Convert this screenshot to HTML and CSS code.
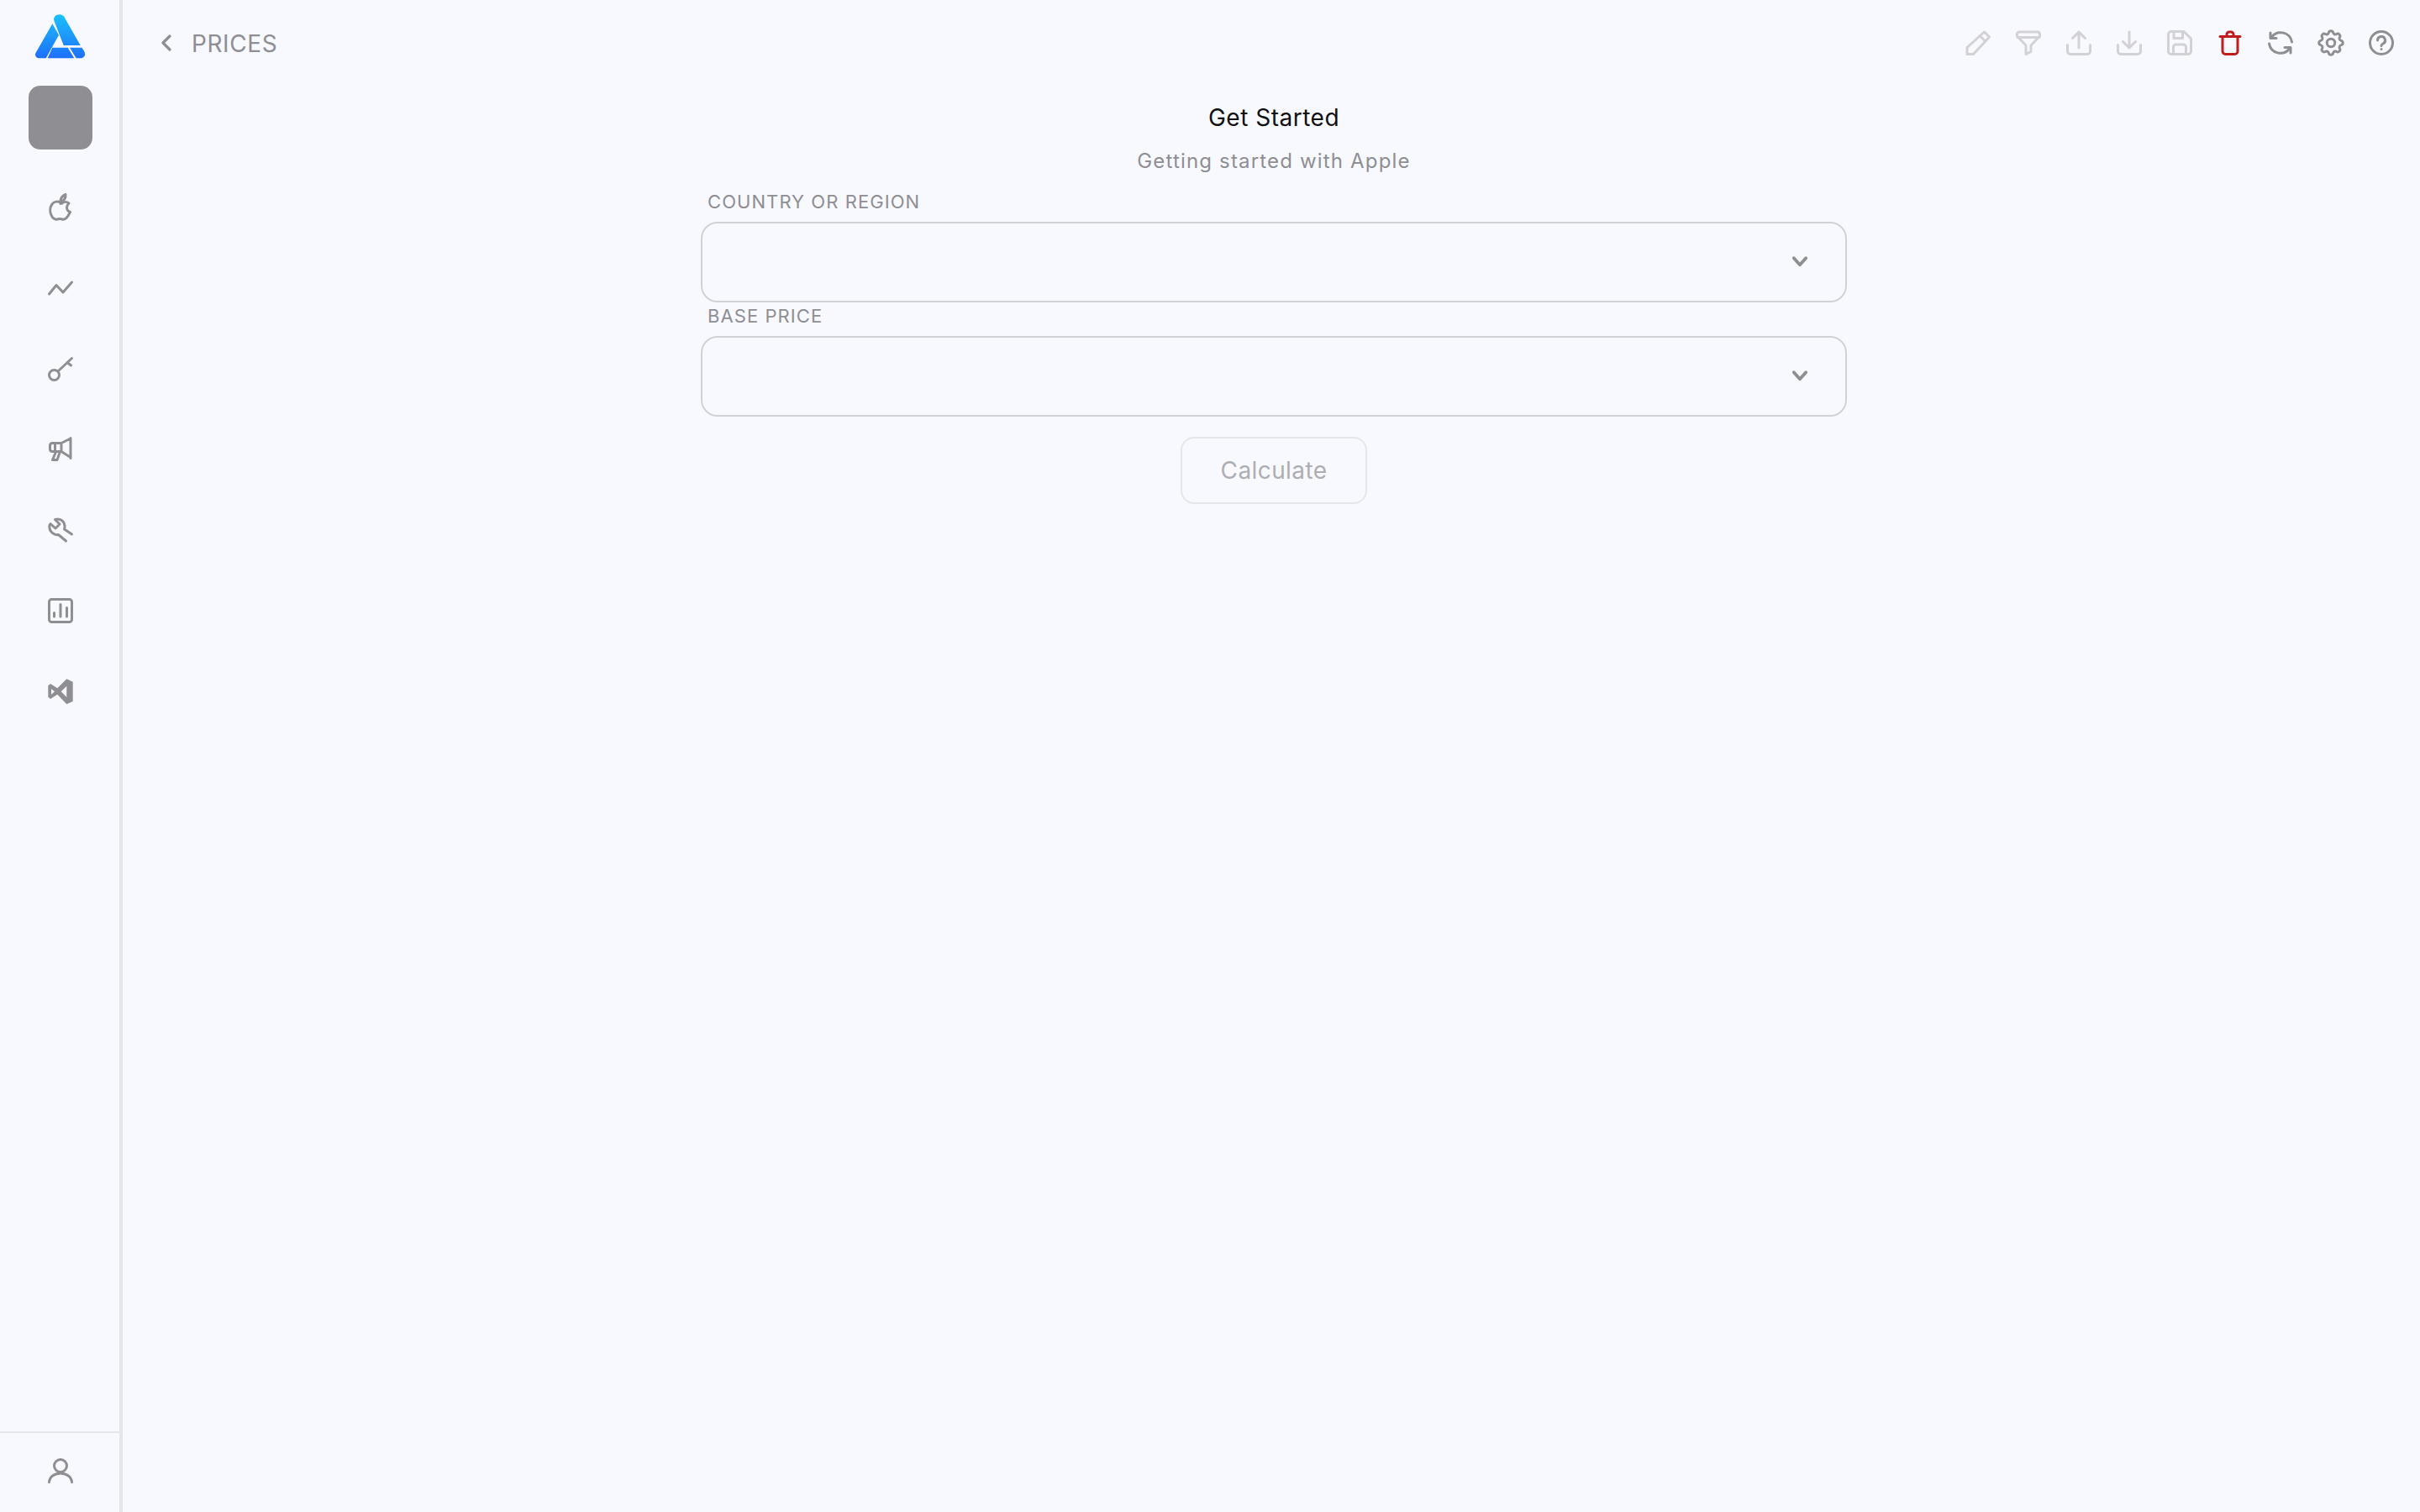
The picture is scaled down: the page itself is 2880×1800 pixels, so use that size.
FILE: index.html
```html
<!DOCTYPE html>
<html lang="en">
<head>
<meta charset="utf-8">
<title>Prices</title>
<link rel="stylesheet" href="styles.css">
</head>
<body>
<div class="app">
  <aside class="sidebar">
    <div class="side-top">
      <svg class="logo" viewBox="0 0 60 54" aria-hidden="true">
        <defs><linearGradient id="lg" x1="0" y1="0" x2="0" y2="1"><stop offset="0" stop-color="#19c1fd"/><stop offset="1" stop-color="#1f6ffa"/></linearGradient></defs>
        <path fill="url(#lg)" d="M22.500 8C21 5 23.500 .3 28.700 .3 31.500 .3 34 1.500 35.300 4.700L53.700 37H33.700ZM20.300 11.300L28 24.700 12.700 52.300 4.500 52.300C1 52.300-1 49 .5 46ZM20.300 39.700H38.700L46.300 52.300H14.700ZM41 39.700H55.300C58.500 44 60 47 58.700 49.500 57.500 51.500 55.500 52.300 53.700 52.300H48.700Z"/>
      </svg>
      <div class="avatar"></div>
      <nav class="side-nav">
        <a class="side-btn"><svg class="ico" viewBox="0 0 30 30"><path d="M15 9C12 7 7 8 5 11 2 15 2 21 5 26c2 3 4 3.500 6 3 2-.7 4-.7 6 0 3 1 5-1 7-4l2.500-4.500c-3-1-4-3-4-5.500 0-2 1-3.500 2.500-5-2.500-2-6-2-8 0-1 .5-1.500.5-2 .5Z"/><path d="M15 8.500C15 4 17 1 21 -.5 21.500 4 19 7 15 8.500Z"/></svg></a>
        <a class="side-btn"><svg class="ico" viewBox="0 0 30 30"><path d="M1.500 22L10 11.500 18 20 28.500 8"/></svg></a>
        <a class="side-btn"><svg class="ico" viewBox="0 0 30 30"><circle cx="7.500" cy="22.500" r="6"/><path d="M12 18L28.500 2.500M23 7.500L27.500 11"/></svg></a>
        <a class="side-btn"><svg class="ico" viewBox="0 0 30 30"><path d="M27 1.500V25.500M27 2L16 7.500H5A3 3 0 0 0 2.500 10.500V14.500A3 3 0 0 0 5 17.500H16L27 24.500M16 7.500V17.500M8.500 8V17M9.500 18L5.500 27.500H11L14 19"/></svg></a>
        <a class="side-btn"><svg class="ico" viewBox="0 0 30 30"><path d="M12.500 20.500C8 21.500 2 17.500 1.800 11.500 1.700 10 2 8.500 3 7.500L9 13 14 8 8.500 2.500C14 .5 19.500 4 20 10 20.200 11.500 20 13 19.500 14L28.500 20M12.500 20.500L21.500 28"/></svg></a>
        <a class="side-btn"><svg class="ico" viewBox="0 0 30 30"><rect x="1.500" y="1.500" width="27" height="27" rx="3"/><path d="M7.500 17.500V22M15 7.500V22M22.500 11.500V22"/></svg></a>
        <a class="side-btn"><svg class="ico ico-fill" viewBox="0 0 30 30"><path fill-rule="evenodd" d="M22.300 .3L29.700 3.700V27L22.300 30.300 11.300 18.700 3 24 .3 21.700V8.300L3 6 11.300 11.300ZM22.300 8.700L15.700 15.300 22.300 22ZM4 12V18.700L8 15.300Z"/></svg></a>
      </nav>
    </div>
    <div class="side-bottom">
      <svg class="ico" viewBox="0 0 30 30"><circle cx="15" cy="9" r="7.500"/><path d="M1.500 28.500C2 22 8 18 15 18S28 22 28.500 28.500"/></svg>
    </div>
  </aside>
  <main class="main">
    <header class="topbar">
      <div class="crumb">
        <svg class="back" viewBox="0 0 12 20"><path d="M10 2L2 10l8 8"/></svg>
        <span class="crumb-text">PRICES</span>
      </div>
      <div class="tools">
        <svg class="ico ico-off" viewBox="0 0 30 30"><path d="M2 28.500V20.500L22.500 2 28.500 8 9.500 28.500ZM17 6.500L23.500 13"/></svg>
        <svg class="ico ico-off" viewBox="0 0 30 30"><path d="M4 2H26A2.500 2.500 0 0 1 28.500 4.500V7L18 18V25.500L12 28.500V18L1.500 7V4.500A2.500 2.500 0 0 1 4 2ZM2 8.500H28"/></svg>
        <svg class="ico ico-off" viewBox="0 0 30 30"><path d="M1.500 17.500V25A3.500 3.500 0 0 0 5 28.500H25A3.500 3.500 0 0 0 28.500 25V17.500M15 21V2M7.500 9.500L15 2 22.500 9.500"/></svg>
        <svg class="ico ico-off" viewBox="0 0 30 30"><path d="M1.500 17.500V25A3.500 3.500 0 0 0 5 28.500H25A3.500 3.500 0 0 0 28.500 25V17.500M15 2V21M7.500 13.500L15 21 22.500 13.500"/></svg>
        <svg class="ico ico-off" viewBox="0 0 30 30"><path d="M5 1.500H20L28.500 10V25A3.500 3.500 0 0 1 25 28.500H5A3.500 3.500 0 0 1 1.500 25V5A3.500 3.500 0 0 1 5 1.500ZM8 2V9.500H18.500V2M7.500 28V20A3 3 0 0 1 10.500 17H19.500A3 3 0 0 1 22.500 20V28"/></svg>
        <svg class="ico ico-red" viewBox="0 0 30 30"><path d="M3 7.500H27M6 7.500V25A3.500 3.500 0 0 0 9.500 28.500H20.500A3.500 3.500 0 0 0 24 25V7.500M11 7.500V5A3 3 0 0 1 14 2H16A3 3 0 0 1 19 5V7.500"/></svg>
        <svg class="ico" viewBox="0 0 30 30"><path d="M28.500 14A13.500 13.500 0 0 0 4.500 8M3 3V9.500H10M1.500 16A13.500 13.500 0 0 0 25.500 22M27 27V20.500H20"/></svg>
        <svg class="ico" viewBox="2.500 2.500 19 19"><g class="gear"><path d="M10.325 4.317c.426-1.756 2.924-1.756 3.35 0a1.724 1.724 0 0 0 2.573 1.066c1.543-.94 3.31.826 2.37 2.37a1.724 1.724 0 0 0 1.065 2.572c1.756.426 1.756 2.924 0 3.35a1.724 1.724 0 0 0-1.066 2.573c.94 1.543-.826 3.31-2.37 2.37a1.724 1.724 0 0 0-2.572 1.065c-.426 1.756-2.924 1.756-3.35 0a1.724 1.724 0 0 0-2.573-1.066c-1.543.94-3.31-.826-2.37-2.37a1.724 1.724 0 0 0-1.065-2.572c-1.756-.426-1.756-2.924 0-3.35a1.724 1.724 0 0 0 1.066-2.573c-.94-1.543.826-3.31 2.37-2.37 1 .608 2.296.07 2.572-1.065z"/><circle cx="12" cy="12" r="3"/></g></svg>
        <svg class="ico" viewBox="0 0 30 30"><circle cx="15" cy="15" r="13.500"/><path d="M10.500 12a4.500 4.500 0 1 1 6.500 4c-1.200.7-2 1.500-2 2.500M15 22.500v.1"/></svg>
      </div>
    </header>
    <section class="content">
      <h1 class="title">Get Started</h1>
      <p class="subtitle">Getting started with Apple</p>
      <form class="form">
        <label class="label">COUNTRY OR REGION</label>
        <div class="select"><svg class="chev" viewBox="0 0 12 10"><path d="M1.500 2l4.500 5 4.500-5"/></svg></div>
        <label class="label">BASE PRICE</label>
        <div class="select"><svg class="chev" viewBox="0 0 12 10"><path d="M1.500 2l4.500 5 4.500-5"/></svg></div>
        <button class="btn" type="button">Calculate</button>
      </form>
    </section>
  </main>
</div>
</body>
</html>
```
FILE: styles.css
```css
* { box-sizing: border-box; }
html, body { margin: 0; height: 100%; }
body { background: #f8f9fe; font-family: Inter, "Liberation Sans", sans-serif; color: #8e8e93; }
.app { display: flex; height: 1800px; }
.sidebar { width: 146px; flex: none; border-right: 4px solid #e5e5ea; display: flex; flex-direction: column; justify-content: space-between; }
.side-top { display: flex; flex-direction: column; align-items: center; padding: 17px 0 0 2px; }
.logo { width: 60px; height: 54px; display: block; }
.avatar { width: 76px; height: 76px; border-radius: 14px; background: #8e8e93; margin-top: 31px; }
.side-nav { display: flex; flex-direction: column; gap: 66px; margin-top: 54px; }
.side-btn { display: block; width: 30px; height: 30px; }
.ico { width: 30px; height: 30px; display: block; overflow: visible; fill: none; stroke: #8e8e93; stroke-width: 3; stroke-linecap: round; stroke-linejoin: round; flex: none; }
.gear { stroke-width: 1.900; }
.ico-fill { fill: #8e8e93; stroke: none; }
.ico-off { stroke: #d1d1d6; }
.ico-red { stroke: #c01c1c; }
.side-bottom { height: 96px; border-top: 2px solid #e5e5ea; display: flex; align-items: center; justify-content: center; padding: 0 0 4px 2px; }
.main { flex: 1; min-width: 0; display: flex; flex-direction: column; }
.topbar { height: 102px; display: flex; justify-content: space-between; align-items: center; padding: 0 31px 0 46px; }
.crumb { display: flex; align-items: center; gap: 24px; }
.back { width: 12px; height: 20px; fill: none; stroke: #8e8e93; stroke-width: 3.200; stroke-linecap: round; stroke-linejoin: round; }
.crumb-text { font-size: 28px; line-height: 34px; letter-spacing: 0.6px; padding-top: 2px; }
.tools { display: flex; gap: 30px; }
.content { display: flex; flex-direction: column; align-items: center; padding-left: 6px; }
.title { margin: 21px 0 0; font-size: 28px; line-height: 34px; font-weight: 400; letter-spacing: 0.5px; color: #111114; }
.subtitle { margin: 18px 0 0; font-size: 24px; line-height: 34px; letter-spacing: 1.17px; }
.form { width: 1364px; display: flex; flex-direction: column; align-items: center; margin-top: 18px; }
.label { align-self: flex-start; padding-left: 8px; font-size: 22px; line-height: 26px; letter-spacing: 1.07px; margin-bottom: 11px; }
.select { width: 100%; height: 96px; border: 2px solid #d1d1d6; border-radius: 20px; display: flex; align-items: center; justify-content: flex-end; padding-right: 44px; margin-bottom: 3px; }
.chev { width: 20px; height: 16px; fill: none; stroke: #8e8e93; stroke-width: 2.400; stroke-linecap: round; stroke-linejoin: round; }
.btn { width: 222px; height: 80px; margin-top: 21px; border: 2px solid #e5e5ea; border-radius: 16px; background: transparent; font: 400 28px Inter, "Liberation Sans", sans-serif; letter-spacing: 0.4px; color: #aeaeb2; padding: 0; }
```
